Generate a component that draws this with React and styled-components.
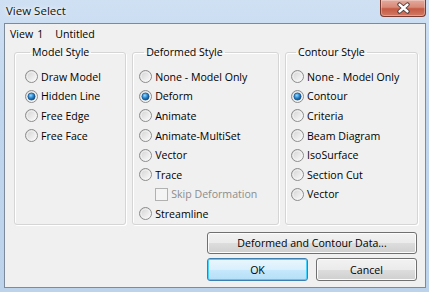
import React from "react";
import styled, { createGlobalStyle } from "styled-components";

const Global = createGlobalStyle`
  html, body { margin: 0; padding: 0; background: #fff; }
  body { font-family: "Open Sans", "Noto Sans", sans-serif; font-size: 10.6px; color: #000; }
  * { box-sizing: border-box; }
`;

const Window = styled.div`
  width: 429px;
  height: 292px;
  display: flex;
  flex-direction: column;
  padding: 0 3px 4px 4px;
  background: linear-gradient(180deg, #cfe0f3 0%, #c0d6ee 40%, #bdd3ec 100%);
  overflow: hidden;
`;

const TitleBar = styled.div`
  height: 24px;
  display: flex;
  align-items: flex-start;
`;

const Title = styled.div`
  padding: 3px 0 0 2px;
  font-size: 11.5px;
  line-height: 16px;
  color: #111;
  text-shadow: 0 0 6px #fff, 0 0 3px #fff;
`;

const CloseBtn = styled.div`
  margin-left: auto;
  width: 46px;
  height: 17px;
  border: 1px solid #7a3a30;
  border-top: none;
  border-radius: 0 0 4px 4px;
  background: linear-gradient(180deg, #e4a99c 0%, #d88a78 45%, #c65a44 55%, #d07a64 100%);
  box-shadow: inset 0 0 0 1px rgba(255, 255, 255, 0.3);
  display: flex;
  align-items: center;
  justify-content: center;
`;

const Client = styled.div`
  flex: 1;
  border: 1px solid #7d8a99;
  background: #f0f0f0;
  display: flex;
  flex-direction: column;
  padding: 3px 7px 6px 9px;
`;

const Header = styled.div`
  display: flex;
  line-height: 15px;
  margin-left: -4px;
  span:nth-child(2) { margin-left: 4px; }
  span:nth-child(3) { margin-left: 12px; }
`;

const Groups = styled.div`
  display: flex;
  gap: 6px;
  margin-top: 3px;
`;

const Group = styled.fieldset`
  margin: 0;
  width: ${(p) => p.$w}px;
  height: 180px;
  border: 1px solid #d5d5d5;
  border-radius: 3px;
  box-shadow: inset 1px 1px 0 #fff, 1px 1px 0 #fff;
  padding: 7px 0 0 ${(p) => p.$pad}px;
  display: flex;
  flex-direction: column;
`;

const Legend = styled.legend`
  margin-left: 5px;
  padding: 0 2px;
  line-height: 15px;
  color: #000;
`;

const Row = styled.div`
  height: 19.6px;
  display: flex;
  align-items: center;
  gap: 3px;
  padding-left: ${(p) => (p.$indent ? 16 : 0)}px;
  color: ${(p) => (p.$disabled ? "#8d8d8d" : "#000")};
  white-space: nowrap;
`;

const Buttons = styled.div`
  display: flex;
  flex-direction: column;
  align-items: flex-end;
  gap: 4px;
  margin-top: 7px;
  padding-right: 1px;
`;

const ButtonRow = styled.div`
  display: flex;
  gap: 8px;
`;

const Button = styled.div`
  width: ${(p) => p.$w}px;
  height: ${(p) => p.$h}px;
  border: 1px solid ${(p) => (p.$default ? "#3c7fb1" : "#707070")};
  border-radius: 3px;
  display: flex;
  align-items: center;
  justify-content: center;
  background: ${(p) =>
    p.$default
      ? "linear-gradient(180deg, #eaf6fd 0%, #d9f0fc 50%, #c6e8fc 51%, #b4dff7 100%)"
      : "linear-gradient(180deg, #f2f2f2 0%, #ebebeb 50%, #dddddd 51%, #cfcfcf 100%)"};
  box-shadow: inset 0 0 0 1px ${(p) => (p.$default ? "#48d1fd" : "#fcfcfc")};
`;

const Radio = ({ checked }) => (
  <svg width="13" height="13" viewBox="0 0 13 13">
    <defs>
      <linearGradient id="rf" x1="0" y1="0" x2="1" y2="1">
        <stop offset="0" stopColor="#cfcfcf" />
        <stop offset="1" stopColor="#ffffff" />
      </linearGradient>
      <radialGradient id="rd" cx="0.4" cy="0.35" r="0.7">
        <stop offset="0" stopColor="#9ad9fb" />
        <stop offset="0.5" stopColor="#2a8ad4" />
        <stop offset="1" stopColor="#0a3f73" />
      </radialGradient>
    </defs>
    <circle cx="6.5" cy="6.5" r="6" fill="url(#rf)" stroke="#8c8c8c" />
    <circle cx="6.5" cy="6.5" r="4.5" fill="none" stroke="#f4f4f4" strokeWidth="0.8" />
    {checked && <circle cx="6.5" cy="6.5" r="3.6" fill="url(#rd)" stroke="#1b4d7c" strokeWidth="0.7" />}
  </svg>
);

const Check = () => (
  <svg width="13" height="13" viewBox="0 0 13 13">
    <rect x="0.5" y="0.5" width="12" height="12" fill="#f4f4f4" stroke="#b1b1b1" />
  </svg>
);

const Option = ({ label, checked }) => (
  <Row>
    <Radio checked={checked} />
    <span>{label}</span>
  </Row>
);

export default function App() {
  return (
    <>
      <Global />
      <Window>
        <TitleBar>
          <Title>View Select</Title>
          <CloseBtn>
            <svg width="15" height="12" viewBox="0 0 15 12">
              <path d="M3.5 2.5 L11.5 9.5 M11.5 2.5 L3.5 9.5" stroke="#4a3434" strokeWidth="4.2" strokeLinecap="round" />
              <path d="M3.5 2.5 L11.5 9.5 M11.5 2.5 L3.5 9.5" stroke="#fff" strokeWidth="2.4" strokeLinecap="round" />
            </svg>
          </CloseBtn>
        </TitleBar>
        <Client>
          <Header>
            <span>View</span>
            <span>1</span>
            <span>Untitled</span>
          </Header>
          <Groups>
            <Group $w={113} $pad={10}>
              <Legend>Model Style</Legend>
              <Option label="Draw Model" />
              <Option label="Hidden Line" checked />
              <Option label="Free Edge" />
              <Option label="Free Face" />
            </Group>
            <Group $w={148} $pad={6}>
              <Legend>Deformed Style</Legend>
              <Option label="None - Model Only" />
              <Option label="Deform" checked />
              <Option label="Animate" />
              <Option label="Animate-MultiSet" />
              <Option label="Vector" />
              <Option label="Trace" />
              <Row $indent $disabled>
                <Check />
                <span>Skip Deformation</span>
              </Row>
              <Option label="Streamline" />
            </Group>
            <Group $w={134} $pad={5}>
              <Legend>Contour Style</Legend>
              <Option label="None - Model Only" />
              <Option label="Contour" checked />
              <Option label="Criteria" />
              <Option label="Beam Diagram" />
              <Option label="IsoSurface" />
              <Option label="Section Cut" />
              <Option label="Vector" />
            </Group>
          </Groups>
          <Buttons>
            <Button $w={210} $h={22}>Deformed and Contour Data...</Button>
            <ButtonRow>
              <Button $w={101} $h={23} $default>OK</Button>
              <Button $w={101} $h={23}>Cancel</Button>
            </ButtonRow>
          </Buttons>
        </Client>
      </Window>
    </>
  );
}
